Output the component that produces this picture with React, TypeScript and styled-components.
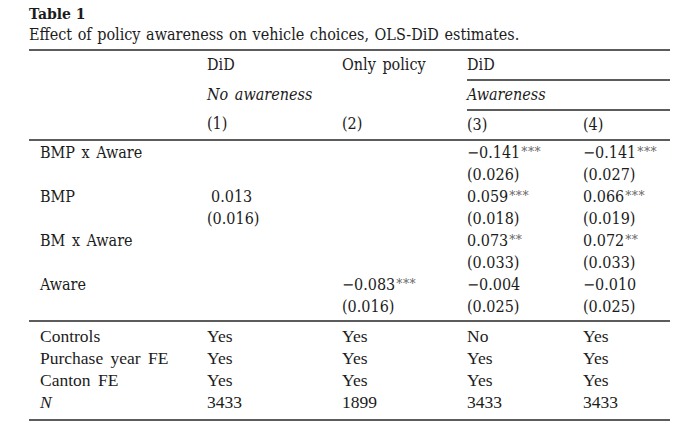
import React from 'react';
import styled, { createGlobalStyle } from 'styled-components';

const GlobalStyle = createGlobalStyle`
  html, body {
    margin: 0;
    padding: 0;
    background: #ffffff;
  }
`;

const topFont = `"DejaVu Serif Condensed", "Liberation Serif", serif`;
const bottomFont = `"Liberation Serif", serif`;
const rule = '2px solid #5c5c5c';

const Page = styled.div`
  width: 641px;
  padding: 3px 0 0 29px;
  color: #1c1c1c;
  font-family: ${topFont};
`;

const Caption = styled.div`
  line-height: 21px;
`;

const Label = styled.div`
  font-weight: bold;
  font-size: 15.5px;
`;

const Title = styled.div`
  font-size: 16px;
  word-spacing: 1px;
`;

const Table = styled.table`
  width: 641px;
  margin-top: 4px;
  border-collapse: collapse;
  table-layout: fixed;
  font-size: 16px;
  word-spacing: 2px;
  border-top: ${rule};
  border-bottom: ${rule};
`;

const HeadCell = styled.th<{ $rule?: boolean; $italic?: boolean }>`
  height: 26px;
  padding: 0 0 2px;
  text-align: left;
  font-weight: normal;
  font-style: ${(p) => (p.$italic ? 'italic' : 'normal')};
  border-bottom: ${(p) => (p.$rule ? rule : 'none')};
`;

const Section = styled.tbody<{ $bottom?: boolean }>`
  font-family: ${(p) => (p.$bottom ? bottomFont : topFont)};
  font-size: ${(p) => (p.$bottom ? '17.5px' : '16px')};
  word-spacing: ${(p) => (p.$bottom ? '3px' : '2px')};
  border-top: ${rule};
`;

const Cell = styled.td<{ $label?: boolean; $shift?: number }>`
  height: 22px;
  padding: 0 0 0 ${(p) => (p.$label ? 11 : p.$shift ?? 0)}px;
  white-space: nowrap;
  vertical-align: middle;
`;

const Spacer = styled.td<{ $h: number }>`
  height: ${(p) => p.$h}px;
  padding: 0;
`;

const Stars = styled.span`
  font-size: 0.85em;
  color: #666;
  vertical-align: 0.12em;
  margin-left: 1px;
  letter-spacing: 0.5px;
`;

type Est = { v: string; s?: string; se: string; shift?: number } | null;

const rows: { name: string; cols: Est[] }[] = [
  {
    name: 'BMP x Aware',
    cols: [null, null, { v: '−0.141', s: '***', se: '(0.026)' }, { v: '−0.141', s: '***', se: '(0.027)' }],
  },
  {
    name: 'BMP',
    cols: [
      { v: '0.013', se: '(0.016)', shift: 4 },
      null,
      { v: '0.059', s: '***', se: '(0.018)' },
      { v: '0.066', s: '***', se: '(0.019)' },
    ],
  },
  {
    name: 'BM x Aware',
    cols: [null, null, { v: '0.073', s: '**', se: '(0.033)' }, { v: '0.072', s: '**', se: '(0.033)' }],
  },
  {
    name: 'Aware',
    cols: [null, { v: '−0.083', s: '***', se: '(0.016)' }, { v: '−0.004', se: '(0.025)' }, { v: '−0.010', se: '(0.025)' }],
  },
];

const controls: string[][] = [
  ['Controls', 'Yes', 'Yes', 'No', 'Yes'],
  ['Purchase year FE', 'Yes', 'Yes', 'Yes', 'Yes'],
  ['Canton FE', 'Yes', 'Yes', 'Yes', 'Yes'],
  ['N', '3433', '1899', '3433', '3433'],
];

const Italic = styled.i``;

export default function App() {
  return (
    <Page>
      <GlobalStyle />
      <Caption>
        <Label>Table 1</Label>
        <Title>Effect of policy awareness on vehicle choices, OLS-DiD estimates.</Title>
      </Caption>
      <Table>
        <colgroup>
          <col style={{ width: 178 }} />
          <col style={{ width: 135 }} />
          <col style={{ width: 125 }} />
          <col style={{ width: 116 }} />
          <col style={{ width: 87 }} />
        </colgroup>
        <thead>
          <tr>
            <HeadCell />
            <HeadCell>DiD</HeadCell>
            <HeadCell>Only policy</HeadCell>
            <HeadCell colSpan={2} $rule>
              DiD
            </HeadCell>
          </tr>
          <tr>
            <HeadCell />
            <HeadCell $italic>No awareness</HeadCell>
            <HeadCell />
            <HeadCell colSpan={2} $rule $italic>
              Awareness
            </HeadCell>
          </tr>
          <tr>
            <HeadCell />
            <HeadCell>(1)</HeadCell>
            <HeadCell>(2)</HeadCell>
            <HeadCell>(3)</HeadCell>
            <HeadCell>(4)</HeadCell>
          </tr>
        </thead>
        <Section>
          {rows.map((r) => (
            <React.Fragment key={r.name}>
              <tr>
                <Cell $label>{r.name}</Cell>
                {r.cols.map((c, i) => (
                  <Cell key={i} $shift={c?.shift}>
                    {c && (
                      <>
                        {c.v}
                        {c.s && <Stars>{c.s}</Stars>}
                      </>
                    )}
                  </Cell>
                ))}
              </tr>
              <tr>
                <Cell $label />
                {r.cols.map((c, i) => (
                  <Cell key={i}>{c?.se}</Cell>
                ))}
              </tr>
            </React.Fragment>
          ))}
          <tr>
            <Spacer $h={3} colSpan={5} />
          </tr>
        </Section>
        <Section $bottom>
          <tr>
            <Spacer $h={3} colSpan={5} />
          </tr>
          {controls.map((r) => (
            <tr key={r[0]}>
              <Cell $label>{r[0] === 'N' ? <Italic>N</Italic> : r[0]}</Cell>
              {r.slice(1).map((v, i) => (
                <Cell key={i}>{v}</Cell>
              ))}
            </tr>
          ))}
          <tr>
            <Spacer $h={6} colSpan={5} />
          </tr>
        </Section>
      </Table>
    </Page>
  );
}
